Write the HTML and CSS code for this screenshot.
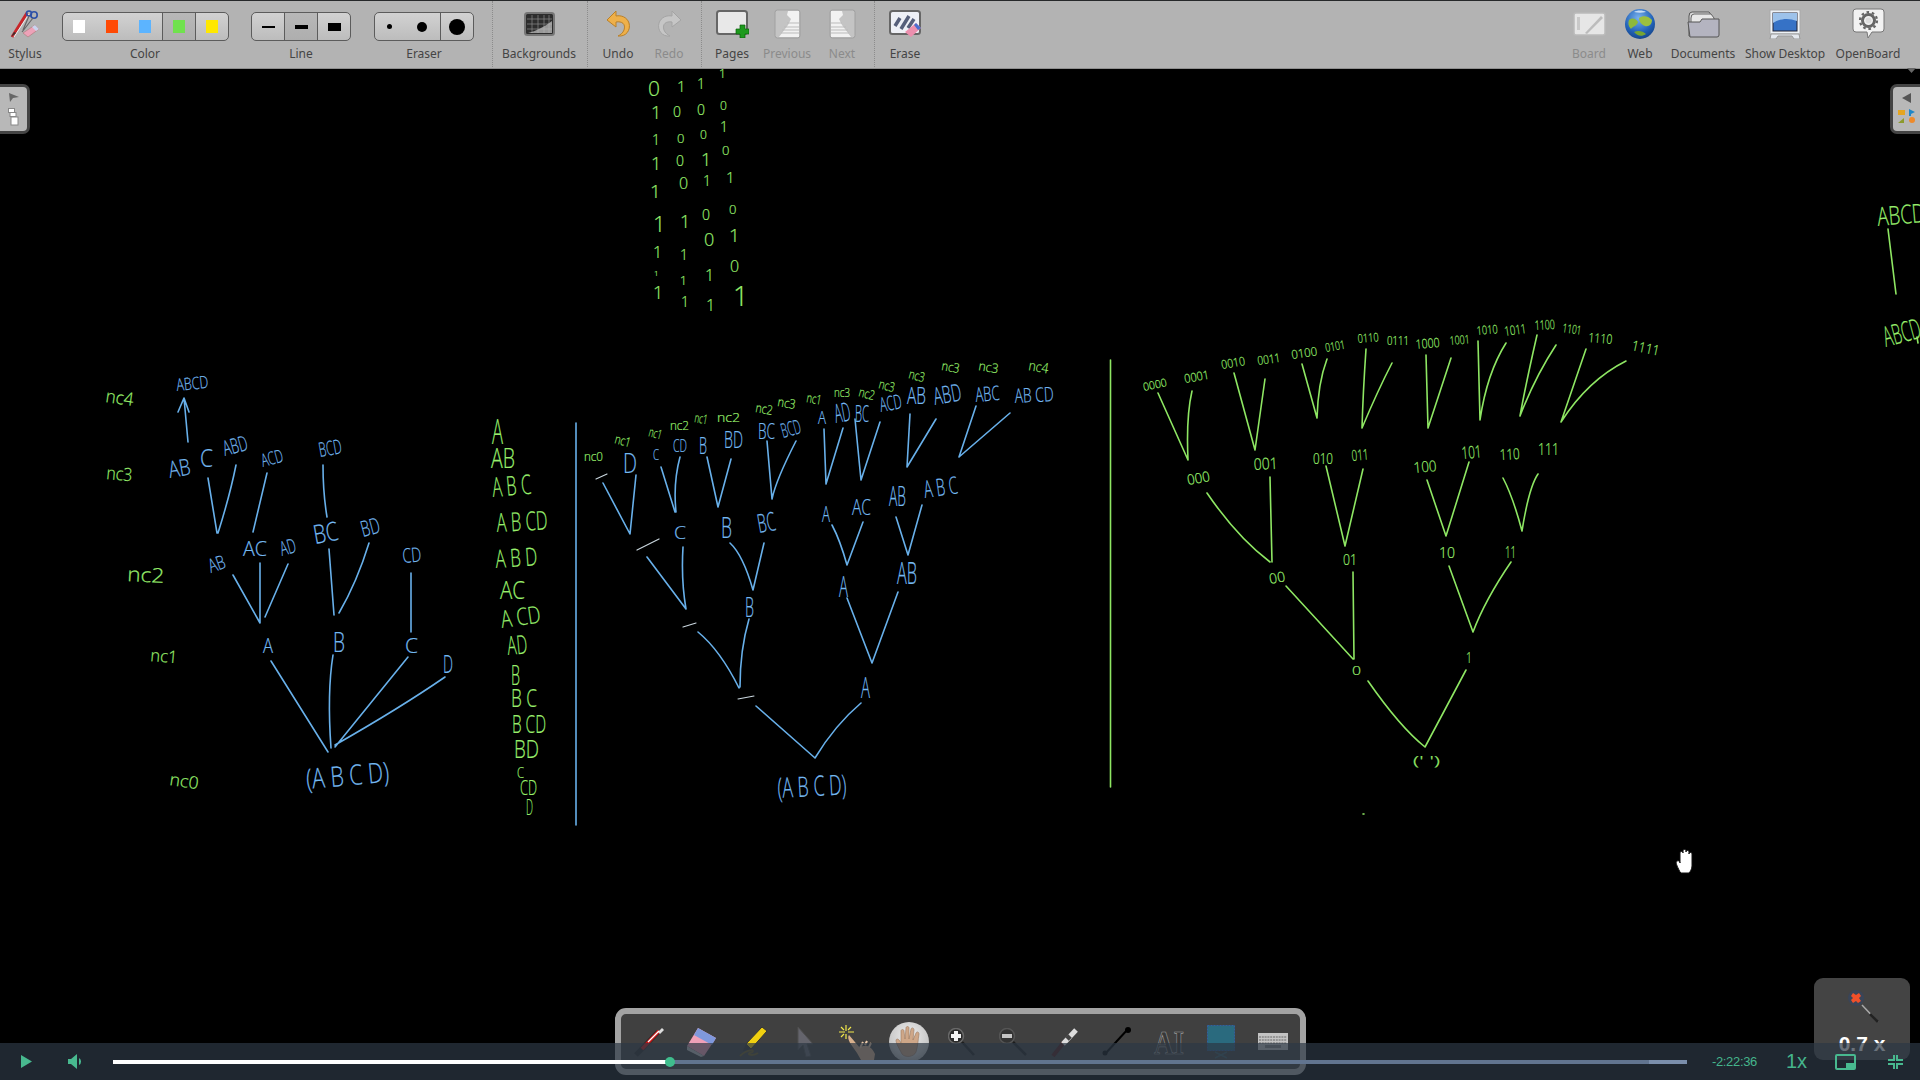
FILE: index.html
```html
<!DOCTYPE html>
<html lang="en">
<head>
<meta charset="utf-8">
<title>OpenBoard recording</title>
<link rel="stylesheet" href="styles.css">
</head>
<body>
<div class="page">
  <header class="toolbar">
    <div class="tool w50">
      <div class="ico"><svg width="30" height="28" viewBox="0 0 30 28"><path d="M2 27 L17 3" stroke="#c8262a" stroke-width="3"/><path d="M4 27 L19 4" stroke="#eee" stroke-width="1"/><path d="M1 27l3-5 2 1z" fill="#333"/><circle cx="24" cy="5" r="3.2" fill="none" stroke="#2b4fa8" stroke-width="1.6"/><circle cx="19" cy="3.5" r="2.5" fill="none" stroke="#2b4fa8" stroke-width="1.6"/><path d="M23 8 L12 22 M19 6 L13 20" stroke="#666" stroke-width="1.2"/><path d="M13 23 L25 15 L29 19 L18 27z" fill="#eda2b8" stroke="#a77"  stroke-width=".6"/><path d="M22 17 L25 15 L29 19 L26 21z" fill="#c9d4ee"/></svg></div>
      <span class="lbl">Stylus</span>
    </div>
    <div class="tool w190">
      <div class="ico"><div class="seg seg-color">
        <div class="cell span3"><i class="sw white"></i><i class="sw red"></i><i class="sw blue"></i></div>
        <div class="cell c33 pressed"><i class="sw green"></i></div>
        <div class="cell c33"><i class="sw yellow"></i></div>
      </div></div>
      <span class="lbl">Color</span>
    </div>
    <div class="tool w122">
      <div class="ico"><div class="seg seg-line">
        <div class="cell"><i class="dash d2"></i></div>
        <div class="cell pressed"><i class="dash d4"></i></div>
        <div class="cell"><i class="dash d8"></i></div>
      </div></div>
      <span class="lbl">Line</span>
    </div>
    <div class="tool w124">
      <div class="ico"><div class="seg seg-eraser">
        <div class="cell wide"><i class="dot r5"></i><i class="dot r10"></i></div>
        <div class="cell"><i class="dot r16"></i></div>
      </div></div>
      <span class="lbl">Eraser</span>
    </div>
    <div class="sep m6"></div>
    <div class="tool w92">
      <div class="ico"><svg width="31" height="24" viewBox="0 0 31 24"><rect x="1" y="1" width="29" height="22" rx="2.5" fill="#2d2d2d" stroke="#777" stroke-width="2"/><path d="M3 7h25M3 12h25M3 17h25M8 3v18M14 3v18M20 3v18M25 3v18" stroke="#8a8a8a" stroke-width=".7"/><path d="M4 21 C12 19 20 15 28 9 L28 21z" fill="#bdbdbd" opacity=".75"/></svg></div>
      <span class="lbl">Backgrounds</span>
    </div>
    <div class="sep m2"></div>
    <div class="tool w60">
      <div class="ico"><svg width="25" height="27" viewBox="0 0 25 27"><path d="M10 1 L1 10 L10 17 L10 12 C16 11 20 14 18 20 C17 23 14 25 12 26 C20 27 25 20 23 13 C21 7 15 5 10 6 Z" fill="#eeb04a" stroke="#b9802a"/></svg></div>
      <span class="lbl">Undo</span>
    </div>
    <div class="tool w42">
      <div class="ico"><svg width="25" height="27" viewBox="0 0 25 27"><path d="M15 1 L24 10 L15 17 L15 12 C9 11 5 14 7 20 C8 23 11 25 13 26 C5 27 0 20 2 13 C4 7 10 5 15 6 Z" fill="#c6c6c6" stroke="#a4a4a4"/></svg></div>
      <span class="lbl off">Redo</span>
    </div>
    <div class="sep m11"></div>
    <div class="tool w60">
      <div class="ico"><svg width="33" height="28" viewBox="0 0 33 28"><rect x="1" y="1" width="30" height="23" rx="2.5" fill="#e8e8e8" stroke="#666" stroke-width="2"/><path d="M24 15h5v4h4v5h-4v4h-5v-4h-4v-5h4z" fill="#1d9a1d" stroke="#0c5e0c" stroke-width=".7"/></svg></div>
      <span class="lbl">Pages</span>
    </div>
    <div class="tool w50">
      <div class="ico"><svg width="27" height="30" viewBox="0 0 27 30"><rect x="1" y="1" width="25" height="28" rx="2.5" fill="#c4c4c4" stroke="#a0a0a0"/><path d="M14 2h11v26H5L14 16l3-6-4-4z" fill="#f2f2f2"/><path d="M8 21h17M7 24h18M10 18h15M13 14h12" stroke="#bbb"/></svg></div>
      <span class="lbl off">Previous</span>
    </div>
    <div class="tool w60">
      <div class="ico"><svg width="27" height="30" viewBox="0 0 27 30"><rect x="1" y="1" width="25" height="28" rx="2.5" fill="#c4c4c4" stroke="#a0a0a0"/><path d="M13 2H2v26h20L13 16l-3-6 4-4z" fill="#f2f2f2"/><path d="M2 21h17M2 24h18M2 18h15M2 14h11" stroke="#bbb"/></svg></div>
      <span class="lbl off">Next</span>
    </div>
    <div class="sep m2"></div>
    <div class="tool w60">
      <div class="ico"><svg width="33" height="28" viewBox="0 0 33 28"><rect x="1" y="1" width="30" height="23" rx="2.5" fill="#eef0f6" stroke="#666" stroke-width="2"/><path d="M6 16l5-8M12 19l8-13M19 18l6-9" stroke="#565f7a" stroke-width="3.5"/><path d="M16 22 L27 13 L32 18 L22 27z" fill="#ec8fae"/><path d="M25 15 L27 13 L32 18 L29 20z" fill="#4a6fd0"/></svg></div>
      <span class="lbl">Erase</span>
    </div>
    <div class="fill"></div>
    <div class="tool w38">
      <div class="ico"><svg width="33" height="24" viewBox="0 0 33 24"><rect x="1" y="1" width="31" height="22" rx="2" fill="#e6e6e6" stroke="#bbb" stroke-width="1.5"/><rect x="4" y="5" width="3" height="13" fill="#c9c9c9"/><path d="M12 21 L28 4 L30 6 L14 22z" fill="#bcbcbc"/></svg></div>
      <span class="lbl off">Board</span>
    </div>
    <div class="tool w64">
      <div class="ico"><svg width="30" height="30" viewBox="0 0 30 30"><defs><radialGradient id="sea" cx=".45" cy=".3" r=".8"><stop offset="0" stop-color="#7ab2ee"/><stop offset=".6" stop-color="#2262b8"/><stop offset="1" stop-color="#123a78"/></radialGradient></defs><circle cx="15" cy="15" r="15" fill="url(#sea)"/><path d="M4 11 C8 8 11 10 13 13 C12 17 8 17 6 20 C3 17 3 14 4 11z" fill="#8db83a"/><path d="M14 9 C18 6 24 7 27 11 C27 15 24 18 20 17 C17 16 14 13 14 9z" fill="#9cc03f"/><path d="M9 23 C13 21 18 22 21 25 C17 28 12 27 9 23z" fill="#77a532"/><path d="M9 3 C12 1 18 1 21 3 C17 4 13 4 9 3z" fill="#e6f0fb" opacity=".8"/></svg></div>
      <span class="lbl">Web</span>
    </div>
    <div class="tool w62">
      <div class="ico"><svg width="33" height="28" viewBox="0 0 33 28"><path d="M2 6 Q2 2 5 2 H22 L25 6 V26 H2z" fill="#d8d8d8" stroke="#555"/><path d="M4 8 Q4 4 7 4 H24 L27 8 V26 H4z" fill="#e8e8e8" stroke="#666"/><path d="M3 27 L1 12 H13 L15 9 H32 V25 Q32 27 30 27z" fill="#b4b4c0" stroke="#555"/></svg></div>
      <span class="lbl">Documents</span>
    </div>
    <div class="tool w102">
      <div class="ico"><svg width="32" height="30" viewBox="0 0 32 30"><rect x="1" y="1" width="30" height="24" fill="#eef2f6" stroke="#aaa"/><rect x="4" y="4" width="24" height="18" fill="#3672c6" stroke="#223"/><path d="M4 14 C12 9 20 9 28 12 V4 H4z" fill="#9dc2ea"/><path d="M2 25h28l1 5h-6l-2-3H9l-2 3H1z" fill="#e4e8ee" stroke="#999"/></svg></div>
      <span class="lbl">Show Desktop</span>
    </div>
    <div class="tool w64">
      <div class="ico"><svg width="33" height="31" viewBox="0 0 33 31"><path d="M4 1 H29 Q32 1 32 4 V21 Q32 24 29 24 H20 L16 30 L15 24 H4 Q1 24 1 21 V4 Q1 1 4 1z" fill="#f2f2f2" stroke="#777"/><circle cx="16.5" cy="12.5" r="6" fill="none" stroke="#666" stroke-width="3"/><circle cx="16.5" cy="12.5" r="8.5" fill="none" stroke="#666" stroke-width="2.2" stroke-dasharray="2.6 2.8"/><circle cx="16.5" cy="12.5" r="3" fill="#ddd"/></svg></div>
      <span class="lbl">OpenBoard</span>
    </div>
    <div class="more"><svg width="9" height="5" viewBox="0 0 9 5"><path d="M0 0h9L4.500 5z" fill="#666"/></svg></div>
  </header>

  <main class="canvas">
    <aside class="tab tab-left">
      <svg width="10" height="9" viewBox="0 0 10 9"><path d="M0 0 L10 4 L4 5 L1 9z" fill="#666"/></svg>
      <svg width="11" height="18" viewBox="0 0 11 18"><rect x="0.500" y="0.500" width="6" height="4" fill="#fff" stroke="#888"/><rect x="2" y="4.500" width="6" height="4" fill="#fff" stroke="#888"/><rect x="3" y="9" width="7" height="8" fill="#fff" stroke="#888"/></svg>
    </aside>
    <aside class="tab tab-right">
      <svg width="9" height="10" viewBox="0 0 9 10"><path d="M9 0 V10 L0 5z" fill="#555"/></svg>
      <svg width="18" height="15" viewBox="0 0 18 15"><rect x="0" y="1" width="7" height="5" fill="#e5a520"/><path d="M11 0 L17 3 L13 5 V7 H11z" fill="#1d86c8"/><path d="M6 9 V14 H0z" fill="#8c9a2c"/><circle cx="14" cy="11" r="3" fill="#ee8a2a"/></svg>
    </aside>
  </main>

  <svg class="ink" width="1920" height="1080" viewBox="0 0 1920 1080">
    <!-- bit matrix -->
    <g class="g hand">
      <text x="648" y="96" font-size="21">0</text><text x="677" y="92" font-size="15">1</text><text x="697" y="89" font-size="14">1</text><text x="719" y="78" font-size="12">1</text>
      <text x="651" y="119" font-size="18">1</text><text x="673" y="117" font-size="14">0</text><text x="697" y="115" font-size="14">0</text><text x="720" y="110" font-size="12">0</text>
      <text x="652" y="145" font-size="14">1</text><text x="677" y="143" font-size="13">0</text><text x="700" y="139" font-size="12">0</text><text x="720" y="132" font-size="14">1</text>
      <text x="651" y="170" font-size="18">1</text><text x="676" y="166" font-size="14">0</text><text x="701" y="166" font-size="18">1</text><text x="722" y="155" font-size="13">0</text>
      <text x="650" y="198" font-size="19">1</text><text x="679" y="189" font-size="16">0</text><text x="703" y="186" font-size="14">1</text><text x="726" y="183" font-size="15">1</text>
      <text x="653" y="232" font-size="22">1</text><text x="680" y="228" font-size="18">1</text><text x="702" y="220" font-size="14">0</text><text x="729" y="214" font-size="13">0</text>
      <text x="653" y="258" font-size="16">1</text><text x="680" y="260" font-size="14">1</text><text x="704" y="246" font-size="18">0</text><text x="729" y="242" font-size="19">1</text>
      <text x="654" y="276" font-size="8">1</text><text x="680" y="285" font-size="12">1</text><text x="705" y="281" font-size="16">1</text><text x="730" y="272" font-size="16">0</text>
      <text x="653" y="299" font-size="18">1</text><text x="681" y="307" font-size="14">1</text><text x="706" y="311" font-size="16">1</text><text x="733" y="306" font-size="27">1</text>
    </g>

    <!-- first tree -->
    <g class="bl">
      <path d="M188 442L184 398M178 412L184 398L189 412"/>
      <path d="M208 478L217 533M236 465Q230 495 218 533M267 473L253 532M323 465Q323 493 327 517"/>
      <path d="M233 575L260 623M260 563V623M288 564L265 617M329 549L334 615M369 543Q357 582 339 613M411 573V632"/>
      <path d="M271 661L328 752M333 655Q327 693 331 748M408 657L335 747M445 677Q400 708 335 745"/>
    </g>
    <g class="b hand">
      <text x="177" y="391" font-size="17" textLength="32" lengthAdjust="spacingAndGlyphs" transform="rotate(-6 177 391)">ABCD</text>
      <text x="170" y="478" font-size="23" textLength="22" lengthAdjust="spacingAndGlyphs" transform="rotate(-10 170 478)">AB</text>
      <text x="200" y="467" font-size="25" textLength="13" lengthAdjust="spacingAndGlyphs">C</text>
      <text x="225" y="456" font-size="21" textLength="25" lengthAdjust="spacingAndGlyphs" transform="rotate(-15 225 456)">ABD</text>
      <text x="263" y="467" font-size="18" textLength="22" lengthAdjust="spacingAndGlyphs" transform="rotate(-15 263 467)">ACD</text>
      <text x="320" y="457" font-size="20" textLength="23" lengthAdjust="spacingAndGlyphs" transform="rotate(-10 320 457)">BCD</text>
      <text x="211" y="573" font-size="19" textLength="17" lengthAdjust="spacingAndGlyphs" transform="rotate(-20 211 573)">AB</text>
      <text x="243" y="556" font-size="20" textLength="24" lengthAdjust="spacingAndGlyphs">AC</text>
      <text x="282" y="556" font-size="20" textLength="16" lengthAdjust="spacingAndGlyphs" transform="rotate(-15 282 556)">AD</text>
      <text x="315" y="544" font-size="26" textLength="25" lengthAdjust="spacingAndGlyphs" transform="rotate(-10 315 544)">BC</text>
      <text x="363" y="537" font-size="22" textLength="19" lengthAdjust="spacingAndGlyphs" transform="rotate(-15 363 537)">BD</text>
      <text x="403" y="563" font-size="20" textLength="19" lengthAdjust="spacingAndGlyphs" transform="rotate(-5 403 563)">CD</text>
      <text x="263" y="653" font-size="20" textLength="10" lengthAdjust="spacingAndGlyphs">A</text>
      <text x="333" y="652" font-size="28" textLength="12" lengthAdjust="spacingAndGlyphs">B</text>
      <text x="405" y="653" font-size="20" textLength="13" lengthAdjust="spacingAndGlyphs">C</text>
      <text x="443" y="673" font-size="25" textLength="10" lengthAdjust="spacingAndGlyphs">D</text>
      <text x="307" y="789" font-size="28" textLength="83" lengthAdjust="spacingAndGlyphs" transform="rotate(-5 307 789)">(A B C D)</text>
    </g>
    <g class="g hand">
      <text x="105" y="402" font-size="18" textLength="28" lengthAdjust="spacingAndGlyphs" transform="rotate(8 105 402)">nc4</text>
      <text x="106" y="479" font-size="18" textLength="26" lengthAdjust="spacingAndGlyphs" transform="rotate(5 106 479)">nc3</text>
      <text x="127" y="581" font-size="20" textLength="37" lengthAdjust="spacingAndGlyphs" transform="rotate(3 127 581)">nc2</text>
      <text x="150" y="661" font-size="17" textLength="27" lengthAdjust="spacingAndGlyphs" transform="rotate(5 150 661)">nc1</text>
      <text x="169" y="785" font-size="17" textLength="29" lengthAdjust="spacingAndGlyphs" transform="rotate(8 169 785)">nc0</text>
      <text x="492" y="444" font-size="34" textLength="11" lengthAdjust="spacingAndGlyphs">A</text>
      <text x="491" y="468" font-size="27" textLength="24" lengthAdjust="spacingAndGlyphs">AB</text>
      <text x="493" y="497" font-size="27" textLength="39" lengthAdjust="spacingAndGlyphs" transform="rotate(-5 493 497)">A B C</text>
      <text x="497" y="532" font-size="26" textLength="51" lengthAdjust="spacingAndGlyphs" transform="rotate(-3 497 532)">A B CD</text>
      <text x="496" y="568" font-size="25" textLength="42" lengthAdjust="spacingAndGlyphs" transform="rotate(-4 496 568)">A B D</text>
      <text x="500" y="599" font-size="26" textLength="25" lengthAdjust="spacingAndGlyphs">AC</text>
      <text x="502" y="628" font-size="24" textLength="40" lengthAdjust="spacingAndGlyphs" transform="rotate(-8 502 628)">A CD</text>
      <text x="508" y="655" font-size="26" textLength="20" lengthAdjust="spacingAndGlyphs" transform="rotate(-5 508 655)">AD</text>
      <text x="511" y="685" font-size="27" textLength="9" lengthAdjust="spacingAndGlyphs">B</text>
      <text x="511" y="707" font-size="26" textLength="26" lengthAdjust="spacingAndGlyphs">B C</text>
      <text x="512" y="733" font-size="26" textLength="34" lengthAdjust="spacingAndGlyphs">B CD</text>
      <text x="514" y="758" font-size="25" textLength="25" lengthAdjust="spacingAndGlyphs">BD</text>
      <text x="517" y="778" font-size="15" textLength="7" lengthAdjust="spacingAndGlyphs">C</text>
      <text x="520" y="795" font-size="20" textLength="17" lengthAdjust="spacingAndGlyphs">CD</text>
      <text x="526" y="815" font-size="22" textLength="7" lengthAdjust="spacingAndGlyphs">D</text>
    </g>

    <!-- second tree -->
    <g class="bl">
      <path d="M576 423V825"/>
      <path d="M603 483L630 534M636 475L630 534M661 467L675 512M680 457Q673 483 676 512M707 457L718 507M731 459L718 507M767 441L772 499M796 441Q776 480 772 499M824 429L826 484M843 428L826 484M855 419L861 480M880 422L861 480M910 414L907 467M936 419L907 467M976 406L959 457M1010 413L959 457"/>
      <path d="M647 557L686 609M683 547Q681 580 686 609M730 543Q743 555 753 590M764 543L753 590M832 525Q840 540 847 565M863 522L847 565M896 517L908 555M922 505L908 555"/>
      <path d="M698 632Q720 650 739 688M749 619Q740 650 740 687M847 598L872 663M898 592L872 663"/>
      <path d="M756 706L815 758M861 703Q835 725 815 758"/>
    </g>
    <g class="wl">
      <path d="M596 479L607 474M637 550L659 539M683 627L696 623M738 699L754 696"/>
    </g>
    <g class="b hand">
      <text x="623" y="473" font-size="28" textLength="14" lengthAdjust="spacingAndGlyphs">D</text>
      <text x="653" y="460" font-size="14" textLength="6" lengthAdjust="spacingAndGlyphs">C</text>
      <text x="673" y="452" font-size="18" textLength="14" lengthAdjust="spacingAndGlyphs">CD</text>
      <text x="699" y="454" font-size="24" textLength="8" lengthAdjust="spacingAndGlyphs">B</text>
      <text x="724" y="448" font-size="24" textLength="19" lengthAdjust="spacingAndGlyphs">BD</text>
      <text x="758" y="439" font-size="22" textLength="17" lengthAdjust="spacingAndGlyphs">BC</text>
      <text x="783" y="438" font-size="20" textLength="20" lengthAdjust="spacingAndGlyphs" transform="rotate(-15 783 438)">BCD</text>
      <text x="818" y="424" font-size="18" textLength="8" lengthAdjust="spacingAndGlyphs">A</text>
      <text x="836" y="423" font-size="26" textLength="16" lengthAdjust="spacingAndGlyphs" transform="rotate(-10 836 423)">AD</text>
      <text x="855" y="422" font-size="24" textLength="14" lengthAdjust="spacingAndGlyphs">BC</text>
      <text x="881" y="412" font-size="20" textLength="22" lengthAdjust="spacingAndGlyphs" transform="rotate(-10 881 412)">ACD</text>
      <text x="907" y="404" font-size="24" textLength="19" lengthAdjust="spacingAndGlyphs">AB</text>
      <text x="935" y="405" font-size="24" textLength="28" lengthAdjust="spacingAndGlyphs" transform="rotate(-10 935 405)">ABD</text>
      <text x="976" y="402" font-size="20" textLength="24" lengthAdjust="spacingAndGlyphs" transform="rotate(-5 976 402)">ABC</text>
      <text x="1015" y="403" font-size="20" textLength="39" lengthAdjust="spacingAndGlyphs" transform="rotate(-3 1015 403)">AB CD</text>
      <text x="674" y="539" font-size="18" textLength="12" lengthAdjust="spacingAndGlyphs">C</text>
      <text x="721" y="538" font-size="30" textLength="11" lengthAdjust="spacingAndGlyphs">B</text>
      <text x="759" y="533" font-size="26" textLength="18" lengthAdjust="spacingAndGlyphs" transform="rotate(-10 759 533)">BC</text>
      <text x="822" y="522" font-size="22" textLength="8" lengthAdjust="spacingAndGlyphs">A</text>
      <text x="852" y="515" font-size="22" textLength="19" lengthAdjust="spacingAndGlyphs">AC</text>
      <text x="889" y="506" font-size="28" textLength="17" lengthAdjust="spacingAndGlyphs">AB</text>
      <text x="925" y="498" font-size="24" textLength="34" lengthAdjust="spacingAndGlyphs" transform="rotate(-8 925 498)">A B C</text>
      <text x="745" y="617" font-size="28" textLength="9" lengthAdjust="spacingAndGlyphs">B</text>
      <text x="839" y="597" font-size="30" textLength="9" lengthAdjust="spacingAndGlyphs">A</text>
      <text x="897" y="584" font-size="32" textLength="20" lengthAdjust="spacingAndGlyphs">AB</text>
      <text x="861" y="698" font-size="29" textLength="9" lengthAdjust="spacingAndGlyphs">A</text>
      <text x="778" y="798" font-size="28" textLength="69" lengthAdjust="spacingAndGlyphs" transform="rotate(-3 778 798)">(A B C D)</text>
    </g>
    <g class="g hand">
      <text x="584" y="461" font-size="13" textLength="19" lengthAdjust="spacingAndGlyphs">nc0</text>
      <text x="614" y="443" font-size="13" textLength="16" lengthAdjust="spacingAndGlyphs" transform="rotate(15 614 443)">nc1</text>
      <text x="648" y="436" font-size="13" textLength="13" lengthAdjust="spacingAndGlyphs" transform="rotate(15 648 436)">nc1</text>
      <text x="670" y="430" font-size="13" textLength="19" lengthAdjust="spacingAndGlyphs">nc2</text>
      <text x="694" y="422" font-size="13" textLength="13" lengthAdjust="spacingAndGlyphs" transform="rotate(10 694 422)">nc1</text>
      <text x="717" y="422" font-size="13" textLength="23" lengthAdjust="spacingAndGlyphs">nc2</text>
      <text x="755" y="412" font-size="13" textLength="17" lengthAdjust="spacingAndGlyphs" transform="rotate(10 755 412)">nc2</text>
      <text x="777" y="406" font-size="13" textLength="18" lengthAdjust="spacingAndGlyphs" transform="rotate(10 777 406)">nc3</text>
      <text x="806" y="402" font-size="13" textLength="15" lengthAdjust="spacingAndGlyphs" transform="rotate(10 806 402)">nc1</text>
      <text x="834" y="397" font-size="13" textLength="16" lengthAdjust="spacingAndGlyphs">nc3</text>
      <text x="858" y="396" font-size="13" textLength="16" lengthAdjust="spacingAndGlyphs" transform="rotate(15 858 396)">nc2</text>
      <text x="878" y="388" font-size="13" textLength="16" lengthAdjust="spacingAndGlyphs" transform="rotate(15 878 388)">nc3</text>
      <text x="908" y="378" font-size="13" textLength="16" lengthAdjust="spacingAndGlyphs" transform="rotate(15 908 378)">nc3</text>
      <text x="941" y="370" font-size="13" textLength="18" lengthAdjust="spacingAndGlyphs" transform="rotate(10 941 370)">nc3</text>
      <text x="978" y="370" font-size="13" textLength="20" lengthAdjust="spacingAndGlyphs" transform="rotate(10 978 370)">nc3</text>
      <text x="1028" y="370" font-size="14" textLength="20" lengthAdjust="spacingAndGlyphs" transform="rotate(10 1028 370)">nc4</text>
    </g>

    <!-- third tree -->
    <g class="gl">
      <path d="M1110.500 360V787"/>
      <path d="M1158 393L1188 460M1192 391Q1186 417 1188 460M1234 373L1255 450M1265 379L1255 450M1302 364L1317 418M1327 359Q1318 383 1317 418M1366 349Q1363 393 1362 428M1392 363Q1378 390 1362 428M1426 355L1428 428M1451 358L1428 428M1478 341L1480 420M1506 343Q1487 373 1480 420M1537 335Q1526 383 1520 416M1556 345Q1535 377 1520 416M1586 349L1561 422M1626 361Q1588 380 1561 422"/>
      <path d="M1207 493Q1237 537 1270 562M1270 477L1272 562M1326 466L1345 546M1363 469L1345 546M1427 480L1446 536M1469 462L1446 536M1503 478Q1513 497 1522 531M1538 474Q1529 487 1522 531"/>
      <path d="M1286 586L1353 659M1353 572L1354 659M1449 566L1473 632M1511 562Q1485 600 1473 632"/>
      <path d="M1368 681Q1400 727 1425 747M1466 670L1425 747"/>
      <path d="M1888 229L1896 294M1917 337L1918 343"/>
      <path d="M1363 814h1"/>
    </g>
    <g class="g hand">
      <text x="1144" y="391" font-size="11" textLength="24" lengthAdjust="spacingAndGlyphs" transform="rotate(-12 1144 391)">0000</text>
      <text x="1185" y="383" font-size="12" textLength="25" lengthAdjust="spacingAndGlyphs" transform="rotate(-10 1185 383)">0001</text>
      <text x="1222" y="369" font-size="12" textLength="24" lengthAdjust="spacingAndGlyphs" transform="rotate(-10 1222 369)">0010</text>
      <text x="1258" y="365" font-size="12" textLength="23" lengthAdjust="spacingAndGlyphs" transform="rotate(-8 1258 365)">0011</text>
      <text x="1292" y="359" font-size="12" textLength="26" lengthAdjust="spacingAndGlyphs" transform="rotate(-8 1292 359)">0100</text>
      <text x="1326" y="352" font-size="12" textLength="20" lengthAdjust="spacingAndGlyphs" transform="rotate(-10 1326 352)">0101</text>
      <text x="1358" y="343" font-size="12" textLength="21" lengthAdjust="spacingAndGlyphs" transform="rotate(-5 1358 343)">0110</text>
      <text x="1387" y="345" font-size="12" textLength="22" lengthAdjust="spacingAndGlyphs">0111</text>
      <text x="1416" y="349" font-size="13" textLength="24" lengthAdjust="spacingAndGlyphs" transform="rotate(-5 1416 349)">1000</text>
      <text x="1450" y="345" font-size="12" textLength="20" lengthAdjust="spacingAndGlyphs" transform="rotate(-5 1450 345)">1001</text>
      <text x="1477" y="335" font-size="12" textLength="21" lengthAdjust="spacingAndGlyphs" transform="rotate(-5 1477 335)">1010</text>
      <text x="1505" y="336" font-size="13" textLength="22" lengthAdjust="spacingAndGlyphs" transform="rotate(-8 1505 336)">1011</text>
      <text x="1535" y="330" font-size="13" textLength="20" lengthAdjust="spacingAndGlyphs" transform="rotate(-3 1535 330)">1100</text>
      <text x="1562" y="332" font-size="12" textLength="19" lengthAdjust="spacingAndGlyphs" transform="rotate(8 1562 332)">1101</text>
      <text x="1588" y="342" font-size="13" textLength="24" lengthAdjust="spacingAndGlyphs" transform="rotate(5 1588 342)">1110</text>
      <text x="1631" y="350" font-size="14" textLength="28" lengthAdjust="spacingAndGlyphs" transform="rotate(12 1631 350)">1111</text>
      <text x="1188" y="485" font-size="14" textLength="23" lengthAdjust="spacingAndGlyphs" transform="rotate(-10 1188 485)">000</text>
      <text x="1254" y="470" font-size="16" textLength="24" lengthAdjust="spacingAndGlyphs" transform="rotate(-3 1254 470)">001</text>
      <text x="1313" y="464" font-size="14" textLength="20" lengthAdjust="spacingAndGlyphs">010</text>
      <text x="1352" y="461" font-size="15" textLength="17" lengthAdjust="spacingAndGlyphs" transform="rotate(-5 1352 461)">011</text>
      <text x="1414" y="473" font-size="15" textLength="23" lengthAdjust="spacingAndGlyphs" transform="rotate(-5 1414 473)">100</text>
      <text x="1462" y="459" font-size="17" textLength="20" lengthAdjust="spacingAndGlyphs" transform="rotate(-5 1462 459)">101</text>
      <text x="1500" y="460" font-size="15" textLength="20" lengthAdjust="spacingAndGlyphs" transform="rotate(-3 1500 460)">110</text>
      <text x="1538" y="455" font-size="17" textLength="21" lengthAdjust="spacingAndGlyphs">111</text>
      <text x="1270" y="584" font-size="14" textLength="16" lengthAdjust="spacingAndGlyphs" transform="rotate(-10 1270 584)">00</text>
      <text x="1343" y="565" font-size="15" textLength="14" lengthAdjust="spacingAndGlyphs">01</text>
      <text x="1439" y="558" font-size="15" textLength="16" lengthAdjust="spacingAndGlyphs">10</text>
      <text x="1505" y="558" font-size="17" textLength="11" lengthAdjust="spacingAndGlyphs">11</text>
      <text x="1352" y="675" font-size="13" textLength="9" lengthAdjust="spacingAndGlyphs">0</text>
      <text x="1466" y="663" font-size="14" textLength="6" lengthAdjust="spacingAndGlyphs">1</text>
      <text x="1413" y="765" font-size="13" textLength="27" lengthAdjust="spacingAndGlyphs">(' ')</text>
      <text x="1878" y="226" font-size="26" textLength="48" lengthAdjust="spacingAndGlyphs" transform="rotate(-5 1878 226)">ABCD</text>
      <text x="1886" y="347" font-size="28" textLength="38" lengthAdjust="spacingAndGlyphs" transform="rotate(-15 1886 347)">ABCD</text>
    </g>

    <!-- hand cursor -->
    <path d="M1680 872 C1677 866 1675 862 1677 861 C1679 860 1680 862 1680 863 V853 C1680 851 1683 851 1683 853 V851 C1683 849 1686 849 1686 851 V852 C1686 850 1689 850 1689 852 V854 C1689 852 1692 852 1692 854 V866 C1692 869 1690 872 1689 873 H1681z" fill="#fff" stroke="#111"/>
  </svg>

  <div class="dock">
    <div class="di"><svg width="31" height="30" viewBox="0 0 31 30"><path d="M2 28 L24 5" stroke="#2a2a2a" stroke-width="5"/><path d="M8 22 L25 4" stroke="#c81818" stroke-width="3.500"/><path d="M24 5 L28 1 L30 3 L26 7z" fill="#ddd"/><path d="M14 15 L25 4" stroke="#fff" stroke-width="1.200"/></svg></div>
    <div class="di"><svg width="31" height="32" viewBox="0 0 31 32"><path d="M12 2 L30 12 L18 30 L1 20z" fill="#f0a0b8"/><path d="M12 2 L30 12 L26 19 L8 9z" fill="#7f98dc"/><path d="M1 20 L18 30 L15 31 L1 24z" fill="#bbb"/></svg></div>
    <div class="di"><svg width="30" height="32" viewBox="0 0 30 32"><path d="M8 18 L24 1 L29 5 L13 23z" fill="#f0d010" stroke="#333"/><path d="M8 18 L13 23 L5 25z" fill="#333"/><path d="M2 30 C10 22 20 24 12 27 C8 29 16 30 20 27" fill="none" stroke="#6c5a20" stroke-width="2"/></svg></div>
    <div class="di"><svg width="17" height="32" viewBox="0 0 17 32"><path d="M1 1 L16 18 L10 18 L14 30 L9 31 L6 19 L1 24z" fill="#64646c" stroke="#4e4e4e"/></svg></div>
    <div class="di"><svg width="38" height="36" viewBox="0 0 38 36"><path d="M8 1v6M1 8h6M10 8h6M8 10v5M3 3l3 3M13 3l-3 3M3 13l3-3" stroke="#f2e84a" stroke-width="1.200"/><path d="M11 11 L22 24 C26 20 33 21 37 30 L36 36 H23 L19 29 L12 19 Q9 13 11 11z" fill="#d8b08c"/><path d="M22 24 L25 18 M27 21 L29 17 M31 23 L33 19" stroke="#eecbaa" stroke-width="2"/></svg></div>
    <div class="di"><div class="hand-btn"><svg width="30" height="32" viewBox="0 0 30 32"><path d="M8 28 C5 22 2 18 2 14 C3 12 5 13 7 17 L7 5 C7 3 10 3 10 5 L11 13 L12 2 C12 0 15 0 15 2 L15 13 L17 3 C18 1 20 2 20 4 L19 14 L22 7 C23 5 25 6 25 8 C24 14 24 20 22 26 C20 31 11 32 8 28z" fill="#cfa788" stroke="#9a7860" stroke-width=".6"/></svg></div></div>
    <div class="di"><svg width="27" height="28" viewBox="0 0 27 28"><circle cx="8" cy="8" r="7.500" fill="#2c2c2c" stroke="#686868" stroke-width="1.500"/><path d="M6 3h4v3h3v4h-3v3H6v-3H3V6h3z" fill="#f4f4f4"/><path d="M14 14 L26 27" stroke="#1e1e1e" stroke-width="2.500"/></svg></div>
    <div class="di"><svg width="29" height="28" viewBox="0 0 29 28"><circle cx="8" cy="8" r="7.500" fill="#333" stroke="#555" stroke-width="1.500"/><rect x="3" y="6" width="10" height="4" fill="#c4c4c4"/><path d="M14 14 L27 27" stroke="#1e1e1e" stroke-width="2.500"/></svg></div>
    <div class="di"><svg width="29" height="30" viewBox="0 0 29 30"><path d="M2 29 L13 15" stroke="#4a1818" stroke-width="4"/><path d="M12 17 L25 3" stroke="#ddd" stroke-width="5"/><path d="M16 12 L19 9" stroke="#444" stroke-width="5"/></svg></div>
    <div class="di"><svg width="30" height="31" viewBox="0 0 30 31"><path d="M3 28 L26 3" stroke="#000" stroke-width="2"/><circle cx="26" cy="4" r="3" fill="#000"/><circle cx="3" cy="27" r="2.500" fill="#000"/></svg></div>
    <div class="di"><svg class="aiwrap" width="32" height="30" viewBox="0 0 32 30"><text class="ai" x="1" y="27" font-size="34" textLength="30" lengthAdjust="spacingAndGlyphs">AI</text></svg></div>
    <div class="di"><svg width="28" height="34" viewBox="0 0 28 34"><rect x="0.500" y="0.500" width="27" height="25" fill="#2a6a7e" stroke="#3060a0" stroke-dasharray="2 1"/><path d="M8 33 L20 27 M8 27 L20 33" stroke="#3a5a66" stroke-width="1.400"/></svg></div>
    <div class="di"><svg width="30" height="17" viewBox="0 0 30 17"><rect x="0" y="0" width="30" height="17" fill="#c4c4c4"/><path d="M1 4h28M1 7h28M1 10h28" stroke="#666" stroke-dasharray="2 .8"/><rect x="7" y="12" width="16" height="3" fill="#888"/></svg></div>
  </div>

  <div class="zoomcard">
    <svg width="34" height="36" viewBox="0 0 34 36"><circle cx="9" cy="9" r="8" fill="#3a4558"/><path d="M6 4l3 2 3-2 2 3-2 2 2 3-3 2-2-2-3 2-2-3 2-2-2-2z" fill="#f0502a"/><path d="M15 16 L31 33" stroke="#aaa" stroke-width="1.500"/><path d="M23 25 L31 33" stroke="#222" stroke-width="2.500"/></svg>
    <span class="zoomval">0.7 x</span>
  </div>

  <footer class="player">
    <svg class="play" width="11" height="13" viewBox="0 0 11 13"><path d="M0 0 L11 6.500 L0 13z"/></svg>
    <svg class="vol" width="14" height="15" viewBox="0 0 14 15"><path d="M0 5 H3 L9 0 V15 L3 10 H0z M11 4 A4 4 0 0 1 11 11z"/></svg>
    <div class="track">
      <div class="buffer" style="width:97.6%"></div>
      <div class="played" style="width:35.4%"></div>
      <div class="knob" style="left:35.4%"></div>
    </div>
    <span class="time">-2:22:36</span>
    <span class="rate">1x</span>
    <span class="pip"><i></i></span>
    <svg class="exitfs" width="15" height="14" viewBox="0 0 15 14"><path d="M5 0h2v6H0V4h5zM8 0h2v4h5v2H8zM0 8h7v6H5v-4H0zM8 8h7v2h-5v4H8z"/></svg>
  </footer>
</div>
</body>
</html>
```
FILE: styles.css
```css
* { box-sizing: border-box; }
html, body { margin: 0; height: 100%; background: #000; overflow: hidden; }
.page {
  position: relative;
  width: 100vw;
  height: 100vh;
  display: flex;
  flex-direction: column;
  background: #000;
  font-family: "Noto Sans", "Open Sans", sans-serif;
}

/* top toolbar */
.toolbar {
  position: relative;
  z-index: 2;
  flex: none;
  height: 69px;
  display: flex;
  background: #b3b3b3;
  border-top: 1px solid #26282a;
  border-bottom: 1px solid #8f8f8f;
}
.tool { flex: none; display: flex; flex-direction: column; align-items: center; }
.ico { height: 45px; display: flex; align-items: center; justify-content: center; }
.lbl { font-size: 12px; line-height: 16px; color: #444; white-space: nowrap; }
.lbl.off { color: #8b8b8b; }
.w38 { width: 38px; } .w42 { width: 42px; } .w50 { width: 50px; } .w60 { width: 60px; }
.w62 { width: 62px; } .w64 { width: 64px; } .w92 { width: 92px; } .w102 { width: 102px; }
.w122 { width: 122px; } .w124 { width: 124px; } .w190 { width: 190px; }
.fill { flex: 1; }
.sep { flex: none; width: 1px; height: 66px; border-left: 1px dotted #8c8c8c; }
.m2 { margin-left: 2px; } .m6 { margin-left: 6px; } .m11 { margin-left: 11px; }
.more { flex: none; width: 20px; padding: 55px 0 0 7px; }

.seg {
  display: flex;
  height: 29px;
  margin-top: 6px;
  border: 1px solid #5c5c5c;
  border-radius: 5px;
  overflow: hidden;
  background: linear-gradient(#d2d2d2, #bcbcbc);
}
.seg-color { width: 167px; }
.seg-line { width: 100px; }
.seg-eraser { width: 100px; }
.cell { flex: 1; display: flex; align-items: center; justify-content: space-around; }
.cell + .cell { border-left: 1px solid #5c5c5c; }
.cell.pressed { background: linear-gradient(#b8b8b8, #aeaeae); }
.span3 { flex: none; width: 99px; }
.c33 { flex: none; width: 33px; }
.wide { flex: 2; }
.sw { width: 12px; height: 13px; display: block; }
.white { background: #fff; } .red { background: #ff4a05; } .blue { background: #5cb4ff; }
.green { background: #70e24e; } .yellow { background: #ffe800; }
.dash { display: block; width: 13px; background: #000; }
.d2 { height: 2px; } .d4 { height: 4px; } .d8 { height: 8px; width: 13px; }
.dot { display: block; background: #000; border-radius: 50%; }
.r5 { width: 5px; height: 5px; } .r10 { width: 10px; height: 10px; } .r16 { width: 16px; height: 16px; }

/* canvas */
.canvas { position: relative; flex: 1; }
.tab {
  position: absolute;
  z-index: 2;
  top: 15px;
  width: 30px;
  height: 50px;
  display: flex;
  flex-direction: column;
  align-items: center;
  gap: 6px;
  padding-top: 6px;
  background: #b8b8b8;
  border: 3px solid #444;
}
.tab-left { left: 0; border-left: 0; border-radius: 0 7px 7px 0; }
.tab-right { right: 0; border-right: 0; border-radius: 7px 0 0 7px; }

/* the handwriting */
.ink { position: absolute; left: 0; top: 0; z-index: 0; }
.hand { font-family: "Open Sans", "Noto Sans", sans-serif; font-weight: 300; stroke-width: .2; }
.b { fill: #74b8f0; stroke: #74b8f0; }
.g { fill: #98ee6c; stroke: #98ee6c; }
.bl, .gl, .wl { fill: none; stroke-width: 1.6; stroke-linecap: round; stroke-linejoin: round; }
.bl { stroke: #68b0ea; }
.gl { stroke: #8ee663; }
.wl { stroke: #c9d6de; stroke-width: 1.2; }

/* floating dock */
.dock {
  position: absolute;
  z-index: 1;
  left: 615px;
  top: 1008px;
  width: 691px;
  height: 67px;
  display: flex;
  align-items: center;
  padding-left: 2px;
  background: #404040;
  border: 6px solid #a3a3a3;
  border-radius: 11px;
}
.di { flex: none; width: 52px; display: flex; align-items: center; justify-content: center; }
.hand-btn {
  width: 40px;
  height: 40px;
  display: flex;
  align-items: center;
  justify-content: center;
  border-radius: 50%;
  background: radial-gradient(circle at 50% 35%, #f0f0f0, #c8c8c8 60%, #8a8a8a);
}
.aiwrap { overflow: visible; }
.ai { font-family: "Liberation Serif", serif; font-weight: 700; fill: #383838; stroke: #9a9a9a; stroke-width: .7; }

/* zoom indicator */
.zoomcard {
  position: absolute;
  z-index: 1;
  left: 1814px;
  top: 978px;
  width: 96px;
  height: 82px;
  display: flex;
  flex-direction: column;
  align-items: center;
  padding-top: 11px;
  background: #444;
  border-radius: 9px;
}
.zoomcard svg { margin-left: 3px; }
.zoomval { margin-top: 8px; font: 700 21px/21px "Liberation Sans", sans-serif; color: #fff; white-space: nowrap; }

/* player */
.player {
  position: relative;
  z-index: 2;
  flex: none;
  height: 37px;
  display: flex;
  align-items: center;
  padding-left: 21px;
  background: rgba(44, 56, 68, .7);
  color: #45b58c;
  font-family: "Liberation Sans", Arial, sans-serif;
}
.play, .vol, .exitfs { flex: none; fill: #48b98f; }
.vol { margin-left: 36px; }
.track { position: relative; flex: none; width: 1574px; height: 4px; margin-left: 31px; background: #7a8eab; }
.buffer { position: absolute; left: 0; top: 0; height: 100%; background: #61748f; }
.played { position: absolute; left: 0; top: 0; height: 100%; background: #fff; }
.knob {
  position: absolute;
  top: -3px;
  width: 10px;
  height: 10px;
  margin-left: -5px;
  border-radius: 50%;
  background: #3fbd8d;
}
.time { flex: none; width: 74px; margin-left: 25px; font-size: 13px; letter-spacing: -.35px; }
.rate { flex: none; width: 49px; font-size: 20px; letter-spacing: -.2px; }
.pip {
  flex: none;
  width: 21px;
  height: 16px;
  padding: 7px 0 0 9px;
  border: 2px solid #48b98f;
  border-radius: 2px;
}
.pip i { display: block; width: 8px; height: 5px; background: #48b98f; }
.exitfs { margin-left: 32px; }
```
